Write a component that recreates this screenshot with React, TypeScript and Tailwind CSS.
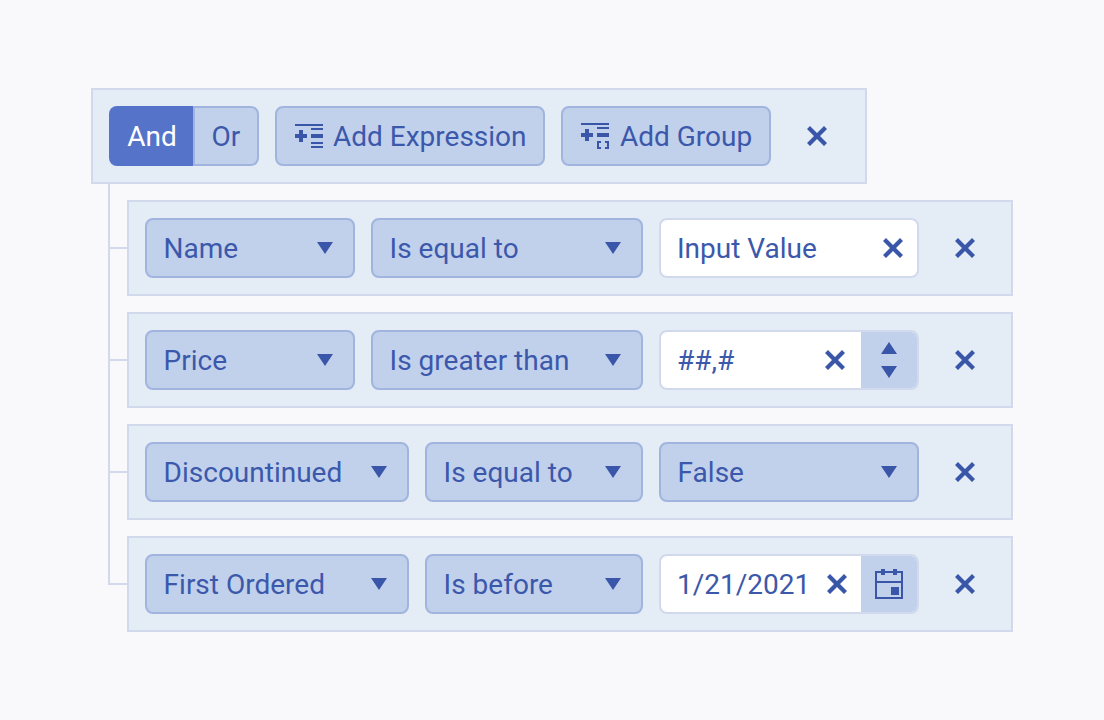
import React from 'react';

const selectCls =
  'flex h-[60px] items-center justify-between rounded-lg border-2 border-[#a1b4dd] bg-[#c1d1eb] pl-[16.6px] pr-[20px]';

function Label({ children }: { children: React.ReactNode }) {
  // Roboto sits a pixel high in a centred box
  return <span className="pt-[2px]">{children}</span>;
}

function CloseIcon() {
  return (
    <svg width="20" height="20" viewBox="0 0 20 20" className="fill-[#3a56a9]">
      <path d="M3 0 10 7 17 0 20 3 13 10 20 17 17 20 10 13 3 20 0 17 7 10 0 3Z" />
    </svg>
  );
}

function Caret() {
  return (
    <svg width="16" height="12" viewBox="0 0 16 12" className="fill-[#3a56a9]">
      <path d="M0 0H16L8 12Z" />
    </svg>
  );
}

function AddExpressionIcon() {
  return (
    <svg width="28" height="24" viewBox="0 0 28 24" className="fill-[#3a56a9]">
      <path d="M0 0H28V2H0ZM16 4H28V6H16ZM16 10H28V14H16ZM16 18H28V20H16ZM16 22H28V24H16ZM4 6H8V10H12V14H8V18H4V14H0V10H4Z" />
    </svg>
  );
}

function AddGroupIcon() {
  return (
    <svg width="28" height="26" viewBox="0 0 28 26" className="fill-[#3a56a9]">
      <path d="M0 0H28V2H0ZM16 4H28V6H16ZM16 10H28V14H16ZM4 6H8V10H12V14H8V18H4V14H0V10H4Z" />
      <path d="M16 18H20V20H18V24H20V26H16ZM24 18H28V26H24V24H26V20H24Z" />
    </svg>
  );
}

function CalendarIcon() {
  return (
    <svg width="28" height="30" viewBox="0 0 28 30" fill="none">
      <path d="M1 3H27V29H1ZM1 13H27" stroke="#3a56a9" strokeWidth="2" />
      <path d="M6 0H10V6H6ZM18 0H22V6H18ZM16 18H24V26H16Z" fill="#3a56a9" />
    </svg>
  );
}

function Select({ label, width }: { label: string; width: string }) {
  return (
    <div className={`${selectCls} ${width}`}>
      <Label>{label}</Label>
      <Caret />
    </div>
  );
}

function RemoveButton() {
  return (
    <div className="flex h-[60px] w-[60px] items-center justify-center">
      <CloseIcon />
    </div>
  );
}

function Row({ last, children }: { last?: boolean; children: React.ReactNode }) {
  return (
    <div className="flex">
      {/* tree connector */}
      <div className="flex w-[19px] shrink-0 flex-col">
        <div className="h-[65px] border-b-2 border-l-2 border-[#d0daec]"></div>
        {!last && <div className="flex-1 border-l-2 border-[#d0daec]"></div>}
      </div>
      <div className="pt-4">
        <div className="flex h-24 w-[886px] items-center gap-4 border-2 border-[#d0daec] bg-[#e4ecf6] pl-4">
          {children}
        </div>
      </div>
    </div>
  );
}

export default function App() {
  return (
    <div
      className="h-[720px] w-[1104px] bg-[#f9f9fb] pl-[91px] pt-[88px] text-[28px] leading-[32px] text-[#3c58ab]"
      style={{ fontFamily: 'Roboto, sans-serif' }}
    >
      {/* group toolbar */}
      <div className="flex h-24 w-[776px] items-center border-2 border-[#d0daec] bg-[#e4ecf6] pl-4">
        <div className="flex h-[60px] w-[84px] items-center justify-center rounded-l-lg bg-[#5473c9] pl-[2px] text-white">
          <Label>And</Label>
        </div>
        <div className="flex h-[60px] w-[66px] items-center justify-center rounded-r-lg border-2 border-[#a1b4dd] bg-[#c1d1eb]">
          <Label>Or</Label>
        </div>
        <div className="ml-4 flex h-[60px] w-[270px] items-center gap-[10px] rounded-lg border-2 border-[#a1b4dd] bg-[#c1d1eb] pl-[18px]">
          <AddExpressionIcon />
          <Label>Add Expression</Label>
        </div>
        <div className="ml-4 flex h-[60px] w-[210px] items-center gap-[11px] rounded-lg border-2 border-[#a1b4dd] bg-[#c1d1eb] pl-[18px]">
          <AddGroupIcon />
          <Label>Add Group</Label>
        </div>
        <div className="ml-4">
          <RemoveButton />
        </div>
      </div>

      <div className="ml-[17px]">
        <Row>
          <Select label="Name" width="w-[210px]" />
          <Select label="Is equal to" width="w-[272px]" />
          <div className="flex h-[60px] w-[260px] items-center justify-between rounded-lg border-2 border-[#d0daec] bg-white pl-4 pr-[14px]">
            <Label>Input Value</Label>
            <CloseIcon />
          </div>
          <RemoveButton />
        </Row>
        <Row>
          <Select label="Price" width="w-[210px]" />
          <Select label="Is greater than" width="w-[272px]" />
          <div className="flex h-[60px] w-[260px] items-stretch overflow-hidden rounded-lg border-2 border-[#d0daec] bg-white">
            <div className="flex flex-1 items-center justify-between pl-4 pr-4">
              <Label>##,#</Label>
              <CloseIcon />
            </div>
            <div className="flex w-14 flex-col items-center justify-center gap-3 bg-[#c1d1eb]">
              <svg width="16" height="12" viewBox="0 0 16 12" className="fill-[#3a56a9]">
                <path d="M8 0 16 12H0Z" />
              </svg>
              <Caret />
            </div>
          </div>
          <RemoveButton />
        </Row>
        <Row>
          <Select label="Discountinued" width="w-[264px]" />
          <Select label="Is equal to" width="w-[218px]" />
          <Select label="False" width="w-[260px]" />
          <RemoveButton />
        </Row>
        <Row last>
          <Select label="First Ordered" width="w-[264px]" />
          <Select label="Is before" width="w-[218px]" />
          <div className="flex h-[60px] w-[260px] items-stretch overflow-hidden rounded-lg border-2 border-[#d0daec] bg-white">
            <div className="flex flex-1 items-center justify-between pl-4 pr-[14px]">
              <Label>1/21/2021</Label>
              <CloseIcon />
            </div>
            <div className="flex w-14 items-center justify-center bg-[#c1d1eb]">
              <CalendarIcon />
            </div>
          </div>
          <RemoveButton />
        </Row>
      </div>
    </div>
  );
}
